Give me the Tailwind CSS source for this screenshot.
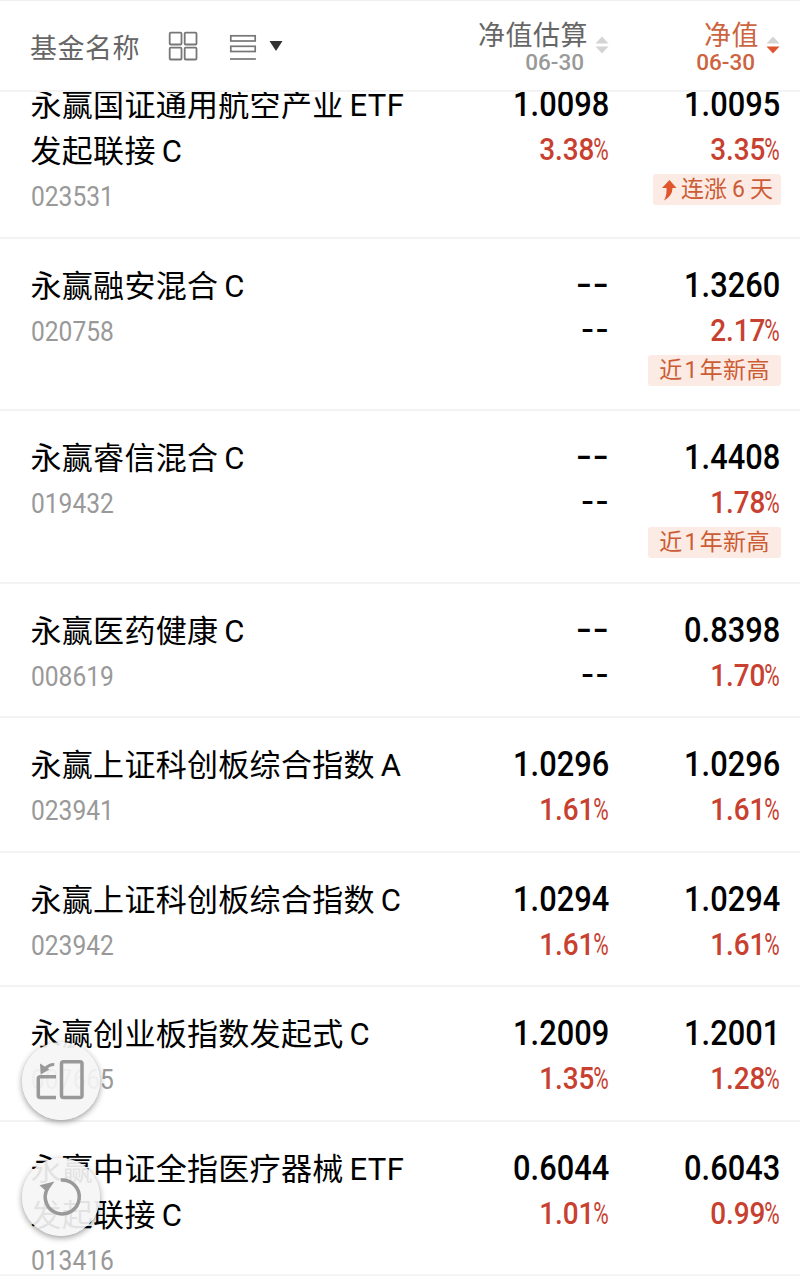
<!DOCTYPE html>
<html lang="zh-CN">
<head>
    <meta charset="UTF-8">
    <title>基金净值</title>
    <script src="https://cdn.jsdelivr.net/npm/@tailwindcss/browser@4"></script>
</head>
<body class="bg-white font-[Roboto,'Noto_Sans_CJK_SC',sans-serif] text-black">
<div class="relative flex flex-col h-[1280px] w-[800px] overflow-hidden">
    <!-- Header -->
    <header class="relative z-10 flex h-[92px] shrink-0 border-t border-b-2 border-t-[#efefef] border-b-[#f3f3f3] bg-white pl-[30px] pr-5 text-[27px] text-[#666]">
        <div class="flex w-[409px] items-center">
            <span class="tracking-[.5px] leading-[40px] pt-[6px]">基金名称</span>
            <svg class="ml-[28px] mt-px h-[30px] w-[30px]" viewBox="0 0 30 30" fill="none" stroke="#777" stroke-width="1.8">
                <rect x="1.7" y="1.7" width="11.8" height="11.8" rx="1"></rect>
                <rect x="16.7" y="1.7" width="11.8" height="11.8" rx="1"></rect>
                <rect x="1.7" y="16.7" width="11.8" height="11.8" rx="1"></rect>
                <rect x="16.7" y="16.7" width="11.8" height="11.8" rx="1"></rect>
            </svg>
            <svg class="ml-[31px] mt-[2px] h-[28px] w-[28px]" viewBox="0 0 28 28" fill="none" stroke="#777" stroke-width="1.7">
                <rect x="1.8" y="2.8" width="24.4" height="5.2"></rect>
                <rect x="1.8" y="13.3" width="24.4" height="5.2"></rect>
                <path d="M1 26h26"></path>
            </svg>
            <svg class="ml-3 h-[12px] w-[14px]" viewBox="0 0 14 12" fill="#333"><path d="M.5 1h13L7 11z"></path></svg>
        </div>
        <div class="flex w-[170px] justify-end">
            <div class="flex flex-col items-end pt-[20px]">
                <span class="tracking-[.5px] leading-[30px]">净值估算</span>
                <span class="mr-1 text-[22.5px] font-medium leading-[22px] text-[#999]">06-30</span>
            </div>
            <svg class="ml-[7px] mt-[35px] h-[18px] w-[14px]" viewBox="0 0 14 18" fill="#d4d4d4">
                <path d="M.5 7.5h13L7 .5z"></path><path d="M.5 10.5h13L7 17.5z"></path>
            </svg>
        </div>
        <div class="flex w-[171px] justify-end text-[#cc6440]">
            <div class="flex flex-col items-end pt-[20px]">
                <span class="tracking-[.5px] leading-[30px]">净值</span>
                <span class="mr-1 text-[22.5px] font-medium leading-[22px]">06-30</span>
            </div>
            <svg class="ml-[7px] mt-[35px] h-[18px] w-[14px]" viewBox="0 0 14 18">
                <path d="M.5 7.5h13L7 .5z" fill="#d4d4d4"></path><path d="M.5 10.5h13L7 17.5z" fill="#dc5530"></path>
            </svg>
        </div>
    </header>

    <!-- Fund list -->
    <main id="fund-list" class="-mt-[34px] h-[1218px] shrink-0 overflow-hidden border-b-2 border-[#f5f5f5]"></main>

    <!-- Floating buttons -->
    <button class="absolute left-[22px] top-[1042px] flex h-[78px] w-[78px] items-center justify-center rounded-full bg-[#f5f5f5]/92 shadow-[0_2px_6px_rgba(0,0,0,.4)]">
        <svg class="h-[78px] w-[78px]" viewBox="0 0 78 78" fill="none" stroke="#999" stroke-width="3.5">
            <rect x="39.500" y="19.700" width="20.500" height="35.800" rx="2"></rect>
            <path d="M34 34.700H18.300q-2 0-2 2V53.500q0 2 2 2H34"></path>
            <path d="M32.300 22.500Q27 22.300 23 27" stroke-width="3"></path>
            <path d="M18 21.500l.7 11 8.800-5z" fill="#999" stroke="none"></path>
        </svg>
    </button>
    <button class="absolute left-[22px] top-[1158px] flex h-[78px] w-[78px] items-center justify-center rounded-full bg-[#f5f5f5]/92 shadow-[0_2px_6px_rgba(0,0,0,.4)]">
        <svg class="h-[78px] w-[78px]" viewBox="0 0 78 78" fill="none" stroke="#999" stroke-width="3.5">
            <path d="M38.700 22A17 17 0 1 1 25.500 30.500"></path>
            <path d="M17.500 27.200L32.500 23.500 25 34z" fill="#999" stroke="none"></path>
        </svg>
    </button>
</div>

<script>
    const funds = [
        { name: ['永赢国证通用航空产业', 'ETF', '发起联接', 'C'], code: '023531', est: ['1.0098', '3.38'], nav: ['1.0095', '3.35'], tag: 'up', h: 180.5 },
        { name: ['永赢融安混合', 'C'], code: '020758', nav: ['1.3260', '2.17'], tag: 'high', h: 172.5 },
        { name: ['永赢睿信混合', 'C'], code: '019432', nav: ['1.4408', '1.78'], tag: 'high', h: 172.5 },
        { name: ['永赢医药健康', 'C'], code: '008619', nav: ['0.8398', '1.70'], h: 134.5 },
        { name: ['永赢上证科创板综合指数', 'A'], code: '023941', est: ['1.0296', '1.61'], nav: ['1.0296', '1.61'], h: 134.5 },
        { name: ['永赢上证科创板综合指数', 'C'], code: '023942', est: ['1.0294', '1.61'], nav: ['1.0294', '1.61'], h: 134.5 },
        { name: ['永赢创业板指数发起式', 'C'], code: '007665', est: ['1.2009', '1.35'], nav: ['1.2001', '1.28'], h: 134.5 },
        { name: ['永赢中证全指医疗器械', 'ETF', '发起联接', 'C'], code: '013416', est: ['0.6044', '1.01'], nav: ['0.6043', '0.99'], h: 180.5 },
    ]

    const tags = {
        up: `
            <div class="-mr-px mt-px flex h-[31px] w-[128px] items-center rounded-[3px] bg-[#fcebe4] pl-[8px] text-[23px] leading-[31px] text-[#cc5c34]">
                <svg class="mr-[4px] h-[22px] w-[16px]" viewBox="0 0 16 22" fill="#e0562c"><path d="M8.500 1L15.500 9h-4Q11.500 17 3 21.500Q6 16 5.500 9H1z"></path></svg>
                连涨<span class="mx-[5px]">6</span>天
            </div>`,
        high: `
            <div class="-mr-px mt-px flex h-[31px] w-[133px] items-center justify-center rounded-[3px] bg-[#fcebe4] text-[23px] leading-[31px] tracking-[.3px] text-[#cc5c34]">
                近<span class="mx-[2px]">1</span>年新高
            </div>`,
    }

    function nameHtml(parts) {
        return parts.map((p, i) => {
            if (i % 2 === 0) return `<span>${p}</span>`
            return `<span class="ml-[6px] tracking-[.4px]">${p}</span>${i < parts.length - 1 ? '<br>' : ''}`
        }).join('')
    }

    function quoteHtml(quote) {
        if (!quote) {
            return `
                <div class="-mr-px h-[45px] origin-right scale-x-[1.3] text-[35px] font-medium leading-[41px] tracking-[1px]">--</div>
                <div class="-mr-px h-[45px] origin-right scale-x-[1.2] text-[31px] font-medium leading-[41px] tracking-[1.5px]">--</div>`
        }
        return `
            <div class="h-[45px] origin-right scale-x-[.88] text-[35px] font-medium leading-[44px]">${quote[0]}</div>
            <div class="flex h-[45px] text-[31px] font-medium leading-[43.5px] text-[#c8402f]">
                <span class="origin-right scale-x-[.9]">${quote[1]}</span>
                <span class="flex w-[15px] justify-end"><span class="origin-right scale-x-[.68] font-normal">%</span></span>
            </div>`
    }

    document.getElementById('fund-list').innerHTML = funds.map(f => `
        <div class="flex border-b-2 border-[#f3f3f3] pl-[30.5px] pr-5 pt-[25px]" style="height:${f.h}px">
            <div class="w-[408.5px] text-[31px] leading-[46px] tracking-[.3px]">
                <div class="whitespace-nowrap">${nameHtml(f.name)}</div>
                <div class="-mt-px origin-left scale-x-[.91] text-[27px] tracking-normal text-[#999]">${f.code}</div>
            </div>
            <div class="flex w-[170px] flex-col items-end">${quoteHtml(f.est)}</div>
            <div class="flex w-[171px] flex-col items-end">${quoteHtml(f.nav)}${tags[f.tag] || ''}</div>
        </div>`).join('')
</script>
</body>
</html>
